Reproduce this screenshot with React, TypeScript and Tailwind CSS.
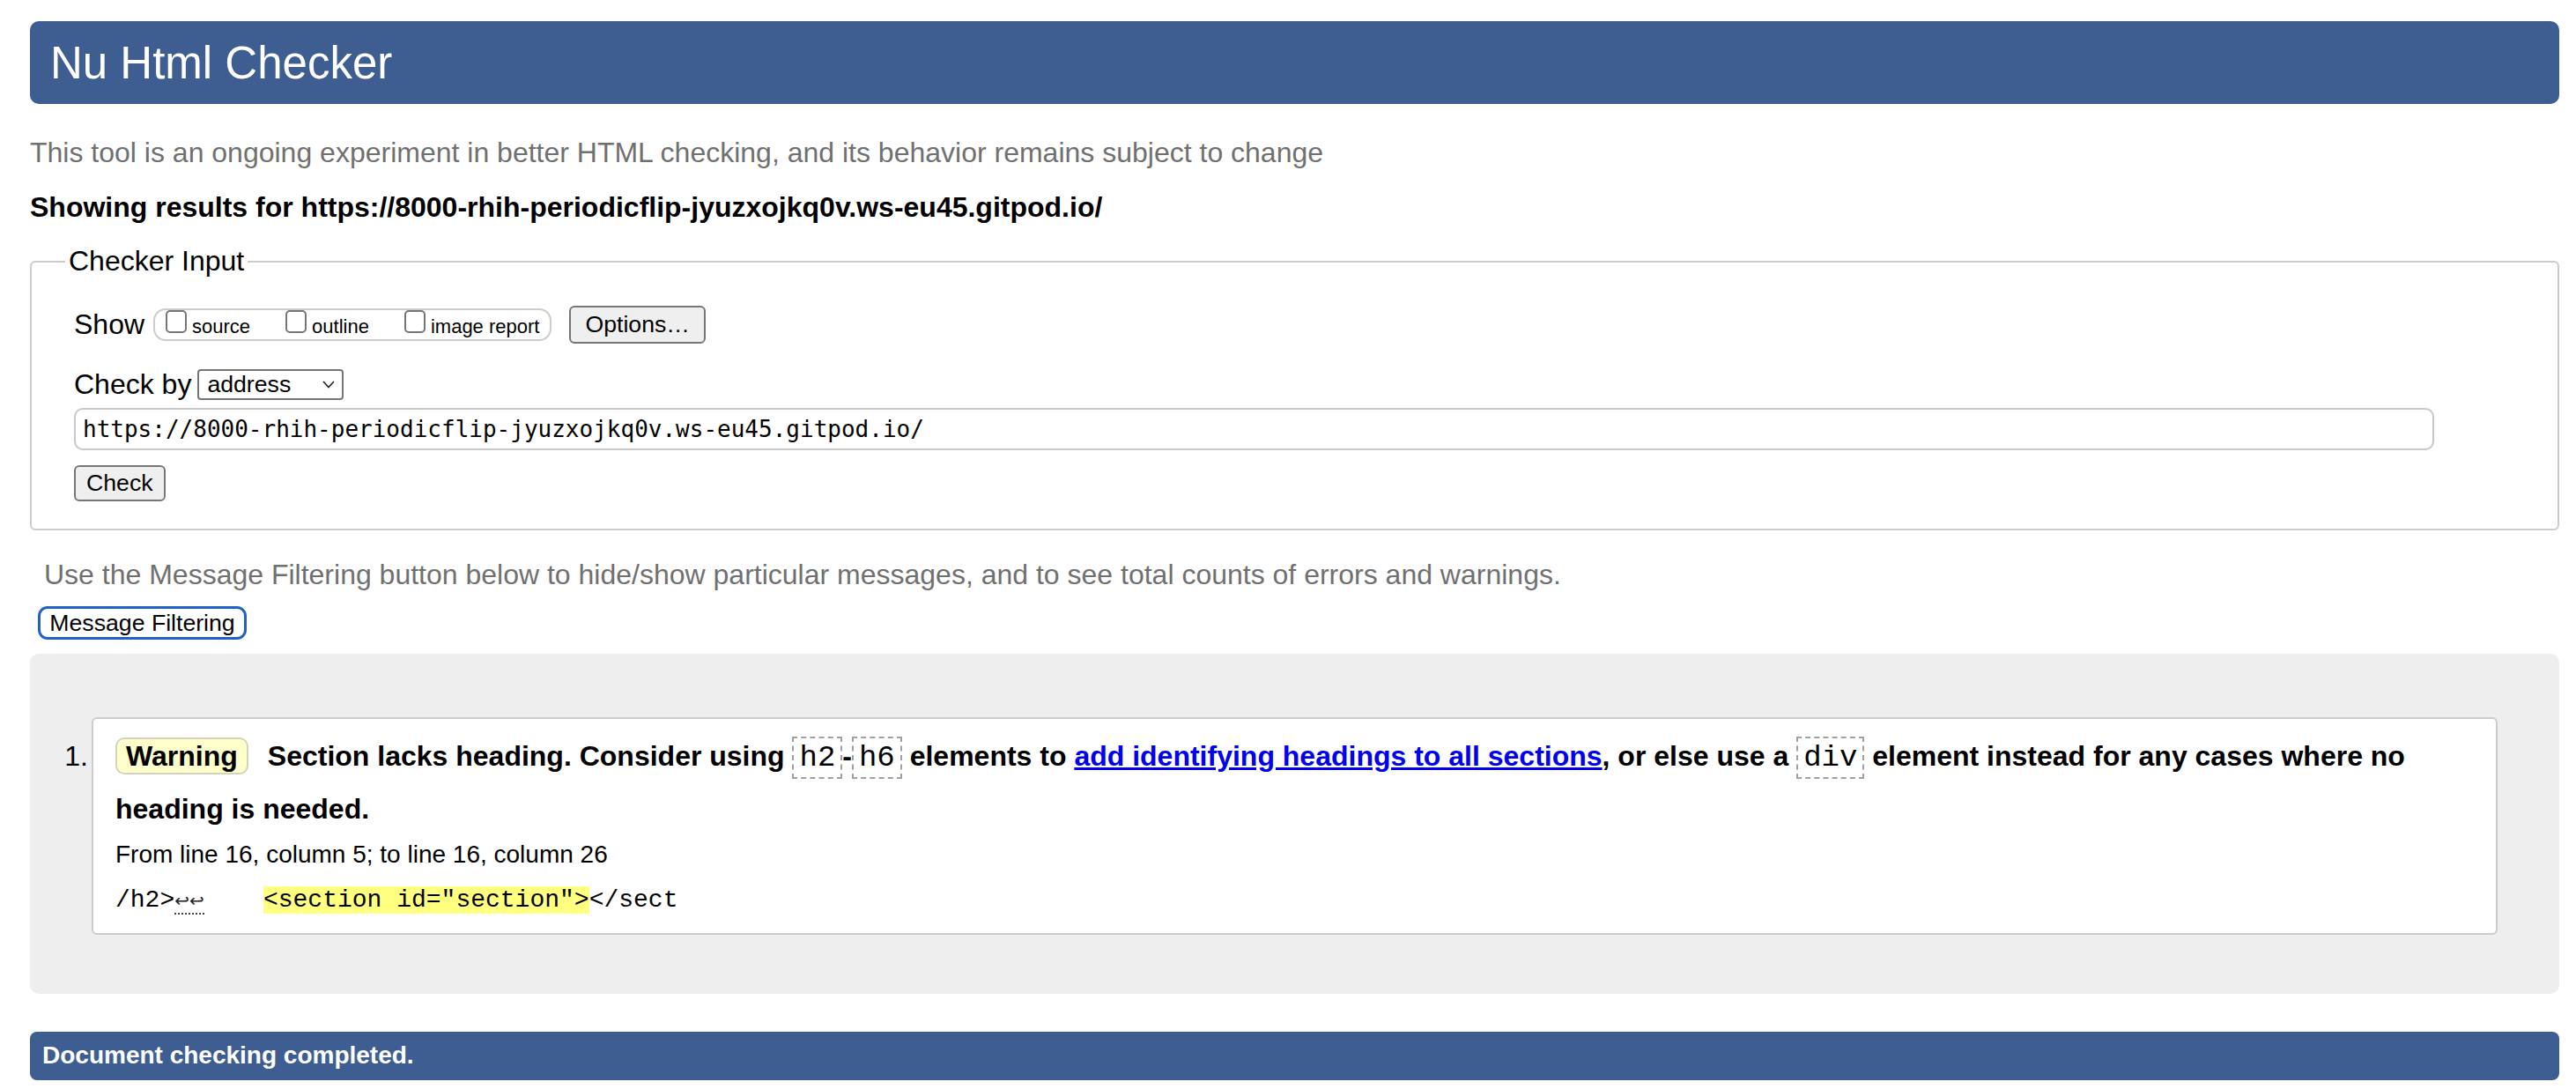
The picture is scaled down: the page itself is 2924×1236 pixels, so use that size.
const sans = "font-['Liberation_Sans',Arial,sans-serif]";

const Checkbox = ({ label }: { label: string }) => (
  <span className="flex items-end gap-[6px]">
    <span className="mb-[8px] inline-block h-[26px] w-[24px] rounded-[5px] border-2 border-[#767676] bg-white" />
    <span className="text-[22px] leading-[30px] text-black">{label}</span>
  </span>
);

const Code = ({ children }: { children: string }) => (
  <code className="inline-block border-2 border-dashed border-[#a0a0a0] px-[6px] align-baseline font-['Liberation_Mono',monospace] text-[34px] font-normal leading-[44px]">
    {children}
  </code>
);

export default function App() {
  return (
    <div className={`${sans} min-h-screen bg-white pt-[24px] pr-[19px] pb-[12px] pl-[34px] leading-[1.15] text-black`}>
      <header className="flex h-[94px] items-center rounded-[10px] bg-[#3e5e91] pl-[23px]">
        <h1 className="text-[51px] leading-none font-normal text-white">Nu Html Checker</h1>
      </header>

      <p className="mt-[37px] text-[32px] leading-[37px] text-[#707070]">
        This tool is an ongoing experiment in better HTML checking, and its behavior remains subject to change
      </p>
      <p className="mt-[25px] text-[32px] leading-[37px] font-bold">
        Showing results for https://8000-rhih-periodicflip-jyuzxojkq0v.ws-eu45.gitpod.io/
      </p>

      <fieldset className="mt-[24px] rounded-[6px] border-2 border-[#cccccc] px-[48px] pb-[31px]">
        <legend className="-ml-[10px] px-[4px] text-[32px] leading-[37px]">Checker Input</legend>

        <div className="mt-[32px] flex h-[43px] items-center">
          <span className="text-[32px] leading-[37px]">Show</span>
          <div className="ml-[10px] flex h-[37px] items-center gap-[40px] rounded-[14px] border-2 border-[#cccccc] pr-[12px] pl-[12px]">
            <Checkbox label="source" />
            <Checkbox label="outline" />
            <Checkbox label="image report" />
          </div>
          <button className="ml-[20px] h-[43px] rounded-[6px] border-2 border-[#767676] bg-[#efefef] px-[16px] text-[26.67px] leading-none text-black">
            Options…
          </button>
        </div>

        <div className="mt-[28px] flex h-[37px] items-center">
          <span className="text-[32px] leading-[37px]">Check by</span>
          <div className="ml-[7px] flex h-[35px] w-[166px] items-center justify-between rounded-[4px] border-2 border-[#767676] pr-[8px] pl-[9px]">
            <span className="text-[26.67px] leading-none">address</span>
            <svg width="14" height="9" viewBox="0 0 14 9" fill="none" stroke="#222" strokeWidth="1.6">
              <polyline points="1,1 7,7.5 13,1" />
            </svg>
          </div>
        </div>

        <div className="mt-[8px] flex h-[48px] w-[2679px] items-center rounded-[10px] border-2 border-[#c8c8c8] pl-[8px]">
          <span className="font-['DejaVu_Sans_Mono',monospace] text-[26px] leading-none text-black">
            https://8000-rhih-periodicflip-jyuzxojkq0v.ws-eu45.gitpod.io/
          </span>
        </div>

        <button className="mt-[17px] h-[41px] rounded-[6px] border-2 border-[#767676] bg-[#efefef] px-[12px] text-[26.67px] leading-none text-black">
          Check
        </button>
      </fieldset>

      <p className="mt-[32px] ml-[16px] text-[32px] leading-[37px] text-[#707070]">
        Use the Message Filtering button below to hide/show particular messages, and to see total counts of errors and warnings.
      </p>
      <button className="mt-[17px] ml-[9px] h-[38px] w-[237px] rounded-[11px] border-[3px] border-[#2160c4] bg-white text-[26.67px] leading-none text-black">
        Message Filtering
      </button>

      <section className="mt-[16px] rounded-[10px] bg-[#eeeeee] pt-[72px] pr-[70px] pb-[67px]">
        <div className="flex">
          <span className="w-[70px] pt-[14px] pr-[4px] text-right text-[32px] leading-[60px]">1.</span>
          <div className="flex-1 rounded-[6px] border-2 border-[#cccccc] bg-white pt-[12px] pr-[25px] pb-[17px] pl-[25px]">
            <p className="text-[32px] leading-[60px] font-bold">
              <span className="mr-[22px] inline-block rounded-[10px] border-2 border-[#d4d4bc] bg-[#ffffcc] px-[10px] leading-[38px]">
                Warning
              </span>
              Section lacks heading. Consider using <Code>h2</Code>-<Code>h6</Code> elements to{" "}
              <a className="text-[#0000ee] underline" href="#">
                add identifying headings to all sections
              </a>
              , or else use a <Code>div</Code> element instead for any cases where no heading is needed.
            </p>
            <p className="mt-[2px] text-[28px] leading-[40px]">From line 16, column 5; to line 16, column 26</p>
            <p className="mt-[12px] font-['Liberation_Mono',monospace] text-[28px] leading-[40px] whitespace-pre">
              /h2&gt;
              <span className="border-b-2 border-dotted border-[#444] pb-[2px] font-['DejaVu_Sans',sans-serif] text-[20px] text-[#222]">
                ↩↩
              </span>
              {"    "}
              <span className="bg-[#ffff80]">&lt;section id="section"&gt;</span>
              &lt;/sect
            </p>
          </div>
        </div>
      </section>

      <footer className="mt-[43px] flex h-[55px] items-center rounded-[8px] bg-[#3e5e91] pl-[14px]">
        <span className="text-[28px] font-bold text-white">Document checking completed.</span>
      </footer>
    </div>
  );
}
